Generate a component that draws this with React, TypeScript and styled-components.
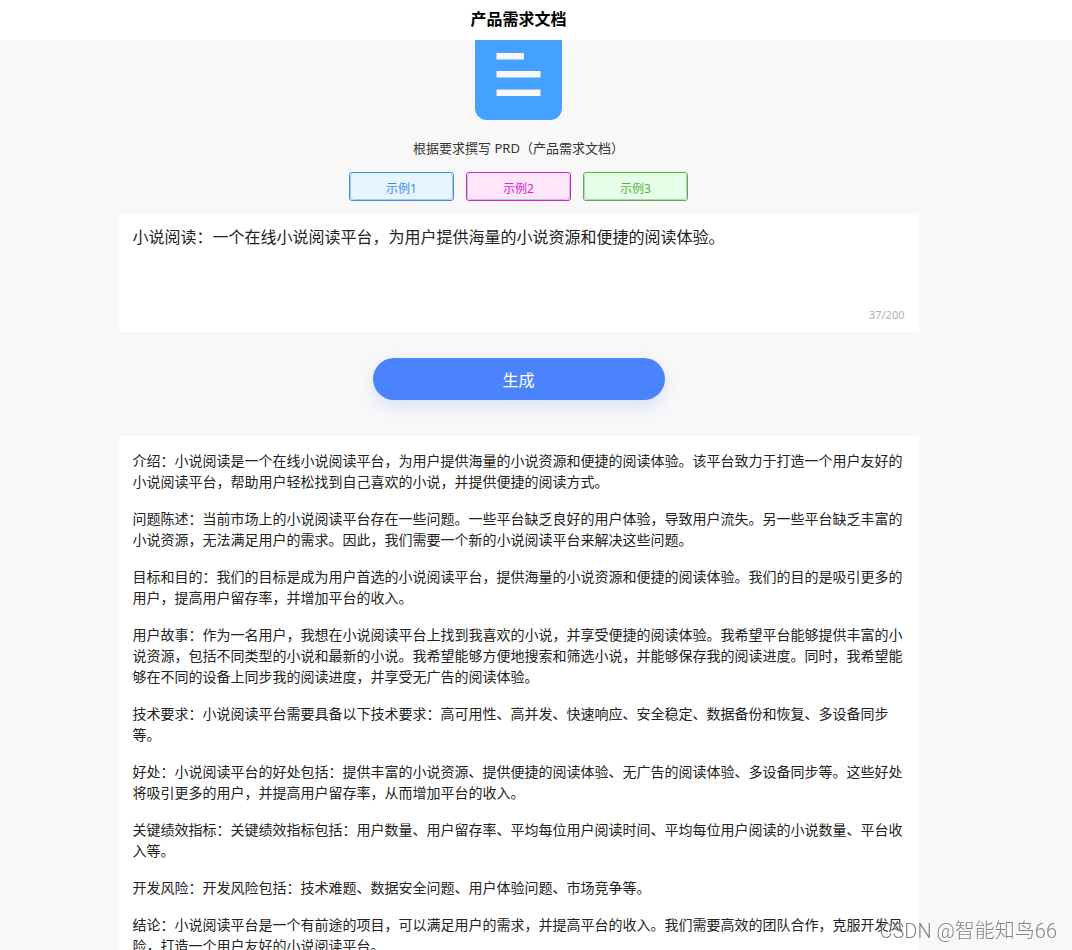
import { useState } from 'react';
import styled, { createGlobalStyle } from 'styled-components';

const GlobalStyle = createGlobalStyle`
  * {
    box-sizing: border-box;
  }
  body {
    margin: 0;
    background: #f8f8f8;
    color: #222;
    font-family: 'Noto Sans', 'Noto Sans CJK SC', sans-serif;
    text-spacing-trim: space-all;
  }
  button,
  textarea {
    font-family: inherit;
  }
`;

const Page = styled.div`
  height: 100vh;
  overflow: hidden;
`;

const Header = styled.header`
  height: 40px;
  padding-right: 35px;
  background: #fff;
`;

const Title = styled.h1`
  margin: 0;
  color: #000;
  font-size: 16px;
  line-height: 38px;
  text-align: center;
`;

const Main = styled.main`
  display: flex;
  flex-direction: column;
  align-items: center;
  padding-right: 35px;
`;

const Logo = styled.svg`
  display: block;
  width: 87px;
  height: 80px;
`;

const Subtitle = styled.p`
  margin: 16px 0 12px;
  color: #333;
  font-size: 13px;
  line-height: 24px;
`;

const Examples = styled.div`
  display: flex;
  gap: 12px;
  margin-bottom: 14px;
`;

const ExampleButton = styled.button<{ $color: string; $tint: string }>`
  display: block;
  width: 105px;
  height: 29px;
  padding: 0;
  border: 1px solid ${(p) => p.$color};
  border-radius: 3px;
  background: ${(p) => p.$tint};
  color: ${(p) => p.$color};
  font-size: 12px;
  cursor: pointer;
`;

const ExampleFace = styled.span`
  display: block;
  height: 27px;
  padding-top: 3px;
  border: 1px solid #b9c6cc;
  border-top-color: transparent;
  border-radius: 5px;
  line-height: 24px;
`;

const Panel = styled.section`
  width: calc(100% - 32px);
  max-width: 800px;
  padding: 14px;
  background: #fff;
`;

const PromptPanel = styled(Panel)`
  padding: 10px 14px 8px;
`;

const PromptInput = styled.textarea`
  display: block;
  width: 100%;
  height: 81px;
  padding: 0;
  border: 0;
  outline: 0;
  resize: none;
  background: transparent;
  color: #222;
  font-size: 16px;
  line-height: 24px;
`;

const Counter = styled.div`
  color: #b2b2b2;
  font-size: 11px;
  line-height: 18px;
  text-align: right;
`;

const GenerateButton = styled.button`
  width: 292px;
  height: 42px;
  margin: 26px 0 36px;
  padding: 2px 0 0;
  border: 0;
  border-radius: 21px;
  background: #4b83fd;
  box-shadow: 0 6px 16px rgba(75, 131, 253, 0.2);
  color: #fff;
  font-size: 16px;
  line-height: 40px;
  cursor: pointer;
`;

const Paragraph = styled.p`
  margin: 0 0 16px;
  font-size: 14px;
  line-height: 21px;
`;

const Watermark = styled.div`
  position: fixed;
  right: 15px;
  bottom: 7px;
  color: rgba(110, 110, 110, 0.85);
  font-family: Roboto, 'Noto Sans CJK SC', sans-serif;
  font-size: 20px;
  font-weight: 300;
  line-height: 24px;
  text-shadow: 1px 1px 0 rgba(255, 255, 255, 0.7);
  pointer-events: none;
`;

const examples = [
  { label: '示例1', color: '#368ff5', tint: '#e6f5ff' },
  { label: '示例2', color: '#d91ad9', tint: '#ffe6fb' },
  { label: '示例3', color: '#52b53a', tint: '#e6ffe8' },
];

const paragraphs = [
  '介绍：小说阅读是一个在线小说阅读平台，为用户提供海量的小说资源和便捷的阅读体验。该平台致力于打造一个用户友好的小说阅读平台，帮助用户轻松找到自己喜欢的小说，并提供便捷的阅读方式。',
  '问题陈述：当前市场上的小说阅读平台存在一些问题。一些平台缺乏良好的用户体验，导致用户流失。另一些平台缺乏丰富的小说资源，无法满足用户的需求。因此，我们需要一个新的小说阅读平台来解决这些问题。',
  '目标和目的：我们的目标是成为用户首选的小说阅读平台，提供海量的小说资源和便捷的阅读体验。我们的目的是吸引更多的用户，提高用户留存率，并增加平台的收入。',
  '用户故事：作为一名用户，我想在小说阅读平台上找到我喜欢的小说，并享受便捷的阅读体验。我希望平台能够提供丰富的小说资源，包括不同类型的小说和最新的小说。我希望能够方便地搜索和筛选小说，并能够保存我的阅读进度。同时，我希望能够在不同的设备上同步我的阅读进度，并享受无广告的阅读体验。',
  '技术要求：小说阅读平台需要具备以下技术要求：高可用性、高并发、快速响应、安全稳定、数据备份和恢复、多设备同步等。',
  '好处：小说阅读平台的好处包括：提供丰富的小说资源、提供便捷的阅读体验、无广告的阅读体验、多设备同步等。这些好处将吸引更多的用户，并提高用户留存率，从而增加平台的收入。',
  '关键绩效指标：关键绩效指标包括：用户数量、用户留存率、平均每位用户阅读时间、平均每位用户阅读的小说数量、平台收入等。',
  '开发风险：开发风险包括：技术难题、数据安全问题、用户体验问题、市场竞争等。',
  '结论：小说阅读平台是一个有前途的项目，可以满足用户的需求，并提高平台的收入。我们需要高效的团队合作，克服开发风险，打造一个用户友好的小说阅读平台。',
];

export default function App() {
  const [prompt, setPrompt] = useState(
    '小说阅读：一个在线小说阅读平台，为用户提供海量的小说资源和便捷的阅读体验。',
  );

  return (
    <Page lang="zh-CN">
      <GlobalStyle />
      <Header>
        <Title>产品需求文档</Title>
      </Header>
      <Main>
        <Logo viewBox="0 0 87 80" aria-hidden="true">
          <path d="M0 0H87V68A12 12 0 0 1 75 80H12A12 12 0 0 1 0 68Z" fill="#45a1ff" />
          <path d="M21.500 13H49V19.500H21.500ZM21.500 31H65.500V37.500H21.500ZM21.500 49.500H65.500V56H21.500Z" fill="#f8f8f8" />
        </Logo>
        <Subtitle>根据要求撰写 PRD（产品需求文档）</Subtitle>
        <Examples>
          {examples.map((e) => (
            <ExampleButton key={e.label} type="button" $color={e.color} $tint={e.tint}>
              <ExampleFace>{e.label}</ExampleFace>
            </ExampleButton>
          ))}
        </Examples>
        <PromptPanel>
          <PromptInput
            aria-label="产品描述"
            maxLength={200}
            spellCheck={false}
            value={prompt}
            onChange={(event) => setPrompt(event.target.value)}
          />
          <Counter>{prompt.length}/200</Counter>
        </PromptPanel>
        <GenerateButton type="button">生成</GenerateButton>
        <Panel>
          {paragraphs.map((text) => (
            <Paragraph key={text}>{text}</Paragraph>
          ))}
        </Panel>
      </Main>
      <Watermark>CSDN @智能知鸟66</Watermark>
    </Page>
  );
}
